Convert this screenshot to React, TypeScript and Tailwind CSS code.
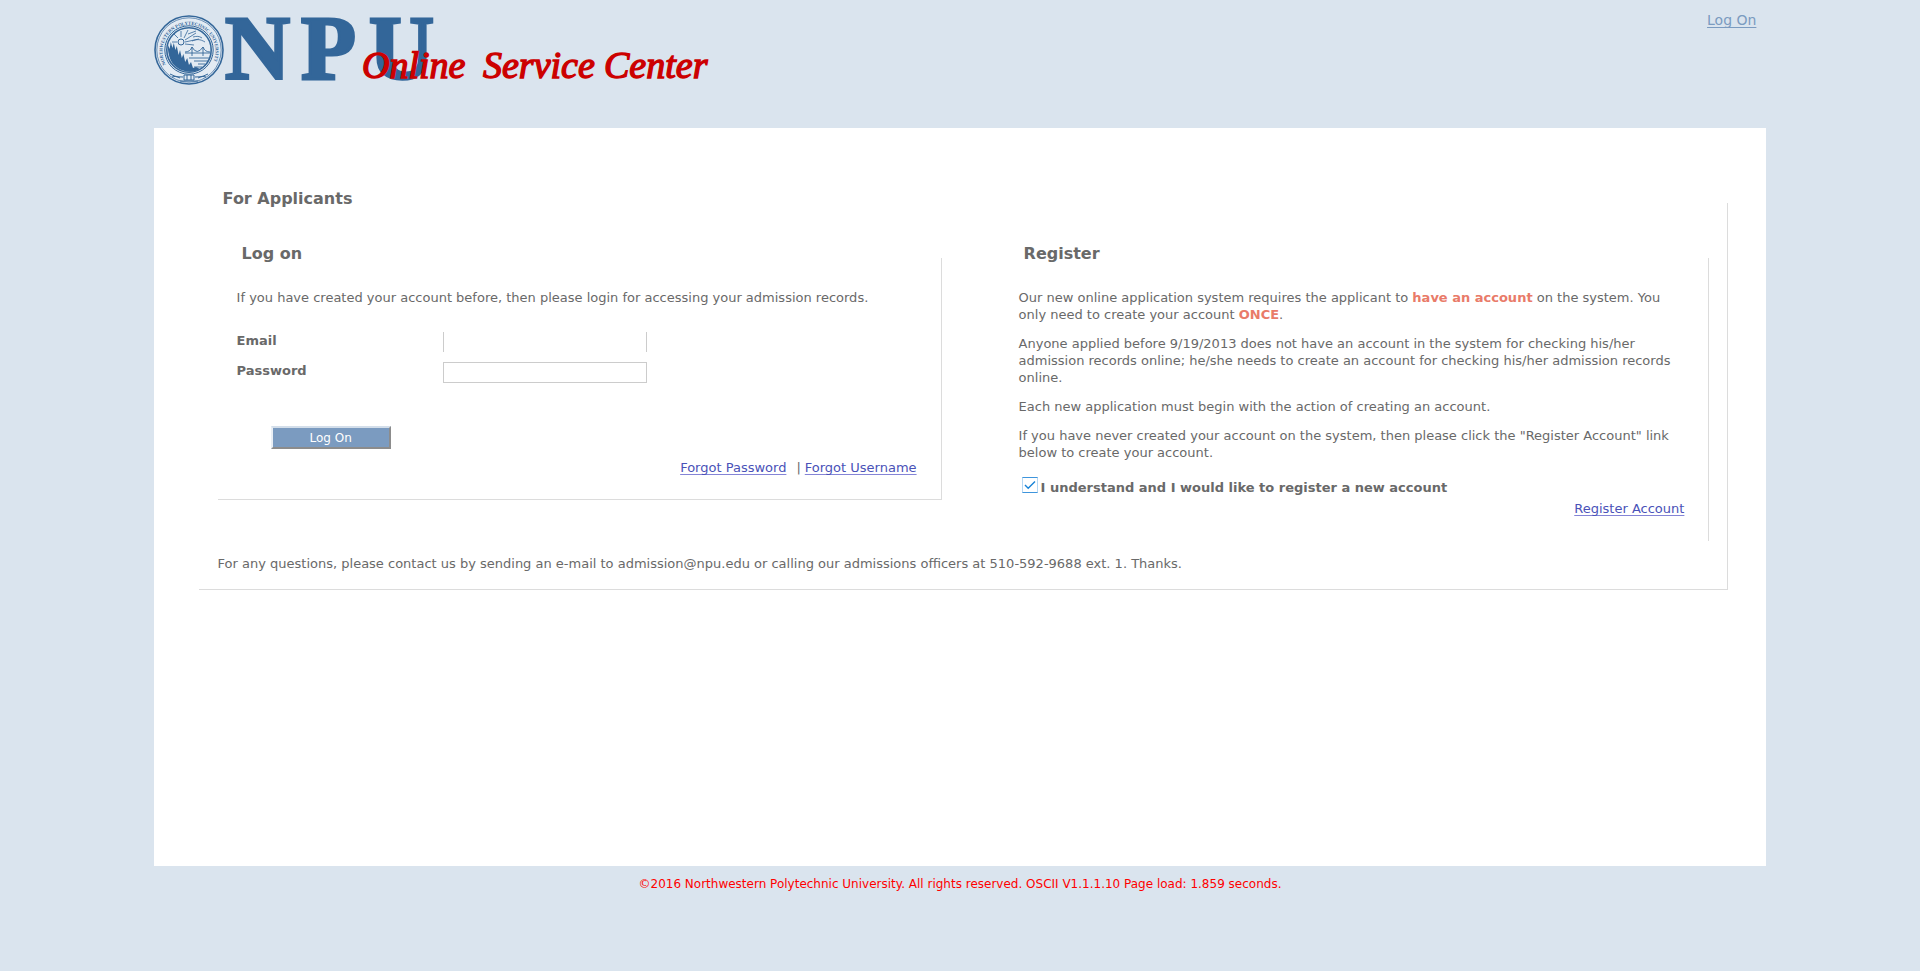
import type { ReactNode } from "react";

function Seal() {
  return (
    <g fill="none" stroke="#336699">
      <circle cx="35" cy="36" r="34" strokeWidth="1.6" fill="#e3ebf3" />
      <circle cx="35" cy="36" r="32.2" strokeWidth="0.7" />
      <circle cx="35" cy="36" r="24.2" strokeWidth="1" />
      <circle cx="35" cy="36" r="22.2" strokeWidth="1.6" />
      <path id="seal-arc" stroke="none" d="M12 50.5 A26.5 26.5 0 1 1 58 50.5" />
      <text fill="#336699" stroke="none" fontSize="4.7" fontWeight="bold" fontFamily="Liberation Serif, serif">
        <textPath href="#seal-arc">NORTHWESTERN POLYTECHNIC UNIVERSITY</textPath>
      </text>
      <path
        fill="#336699"
        stroke="none"
        d="M14 31l1.6 4 1.2-7 1.6 6 1.4-5 1.6 7 1.4-4 1.8 9 1.4-5 1.8 8 1.6-4 1.8 8 2-4 1.8 7 2-3 2 6 3-1 4 2c-8 5-20 3-27-5C15.500 45 13.500 38 14 31z"
      />
      <circle cx="27" cy="28" r="3" fill="#e3ebf3" strokeWidth="1" />
      <path
        strokeWidth="0.8"
        d="M27 23v-6M24 24l-4-4M30 24l4-8M31 26l11-7M31 28l14-3M31 30l9 1M23 28h-5M34 20l8-3M38 27c5-2 8-2 13 1M39 23c4-1 6-1 9 1"
      />
      <path
        strokeWidth="0.9"
        d="M31 39h25M38 33v9M49 33v9M31 38q5 0 7-5q5 9 11 0q2 5 7 5M35 44h20M40 47h14M44 50h7M40 53h8"
      />
      <path
        strokeWidth="1"
        d="M16 60q6 4 13 3M18 63q4-2 8 1M54 60q-6 4-13 3M52 63q-4-2-8 1M30 61h10v5H30zM33 61v5M37 61v5M26 67h18"
      />
    </g>
  );
}

function Logo() {
  return (
    <svg
      width="560"
      height="80"
      viewBox="0 0 560 80"
      role="img"
      aria-label="NPU Online Service Center"
      className="block max-w-full overflow-visible"
    >
      <Seal />
      <g fill="#336699" stroke="#336699" strokeWidth="3" fontFamily="Liberation Serif, serif" fontSize="90" fontWeight="bold">
        <text x="71" y="65">N</text>
        <text x="147" y="65">P</text>
        <text x="215" y="65">U</text>
      </g>
      <g
        fill="#cc0000"
        stroke="#cc0000"
        strokeWidth="1.4"
        fontFamily="Liberation Serif, cursive"
        fontSize="38"
        fontStyle="italic"
      >
        <text x="208" y="64">Online</text>
        <text x="329" y="64">Service</text>
        <text x="450" y="64">Center</text>
      </g>
    </svg>
  );
}

function Group({ title, className = "", children }: { title: string; className?: string; children: ReactNode }) {
  return (
    <fieldset className={"min-w-0 border-[#dcdcdc] " + className}>
      <legend className="ml-6 pb-2 text-base leading-6 font-bold">{title}</legend>
      {children}
    </fieldset>
  );
}

function TextLink({ children }: { children: ReactNode }) {
  return (
    <a
      href="#"
      className="text-[#4a52b8] underline decoration-[#8484d6] decoration-1 underline-offset-2 [text-decoration-skip-ink:none]"
    >
      {children}
    </a>
  );
}

export default function App() {
  return (
    <div className="min-h-screen bg-[#dae4ee] font-['Verdana','DejaVu_Sans',sans-serif] text-[13px] leading-[17px] text-[#696969]">
      <div className="mx-auto w-[84%]">
        <header className="flex h-32 items-start justify-between pt-3 pr-[10px]">
          <h1 className="pt-[2px]">
            <Logo />
          </h1>
          <a
            href="#"
            className="text-sm leading-4 text-[#7b9bc0] underline decoration-1 underline-offset-2 [text-decoration-skip-ink:none]"
          >
            Log On
          </a>
        </header>

        <main className="min-h-[738px] bg-white pt-[59px] pr-[38px] pl-[45px]">
          <Group title="For Applicants" className="border-r border-b pb-[17px]">
            <div className="grid grid-cols-[51fr_50fr] items-start gap-x-[58px] pt-[23px] pr-[18px] pl-[19px]">
              <Group title="Log on" className="border-r border-b pb-[23px]">
                <form className="pt-[15px] pr-6 pl-[19px]" onSubmit={(e) => e.preventDefault()}>
                  <p>If you have created your account before, then please login for accessing your admission records.</p>
                  <div className="mt-[26px] grid grid-cols-[206px_204px] items-start gap-y-[10px] font-bold">
                    <label htmlFor="email">Email</label>
                    <input id="email" type="text" className="h-5 border-x border-[#cccccc] px-1 font-normal" />
                    <label htmlFor="password">Password</label>
                    <input id="password" type="password" className="h-[21px] border border-[#cccccc] px-1 font-normal" />
                  </div>
                  <button
                    type="submit"
                    className="mt-[43px] ml-[34px] flex h-[23px] w-[120px] items-center justify-center border-2 border-t-[#d3deea] border-r-[#8c8c8c] border-b-[#8c8c8c] border-l-[#e9eff5] bg-[#7b9bc0] text-xs text-white"
                  >
                    Log On
                  </button>
                  <div className="mt-[10px] flex justify-end">
                    <TextLink>Forgot Password</TextLink>
                    <span className="mr-1 ml-[10px]">|</span>
                    <TextLink>Forgot Username</TextLink>
                  </div>
                </form>
              </Group>

              <Group title="Register" className="border-r pb-6">
                <div className="flex flex-col gap-3 pt-[15px] pr-5 pl-[19px]">
                  <p>
                    Our new online application system requires the applicant to{" "}
                    <strong className="text-[#e97b69]">have an account</strong> on the system. You only need to create
                    your account <strong className="text-[#e97b69]">ONCE</strong>.
                  </p>
                  <p>
                    Anyone applied before 9/19/2013 does not have an account in the system for checking his/her
                    admission records online; he/she needs to create an account for checking his/her admission records
                    online.
                  </p>
                  <p>Each new application must begin with the action of creating an account.</p>
                  <p>
                    If you have never created your account on the system, then please click the "Register Account" link
                    below to create your account.
                  </p>
                  <div className="pt-1">
                    <label className="flex items-start gap-[3px] pl-[3px] font-bold">
                      <span className="grid size-4 shrink-0 place-items-center">
                        <input
                          type="checkbox"
                          defaultChecked
                          className="peer col-start-1 row-start-1 size-4 appearance-none border border-[#b5d7f3] border-y-[#3e95dc] bg-white"
                        />
                        <svg
                          viewBox="0 0 12 12"
                          className="pointer-events-none col-start-1 row-start-1 hidden size-3 peer-checked:block"
                          fill="none"
                          stroke="#1883d7"
                          strokeWidth="1.4"
                        >
                          <path d="M1 6l3.2 3.2L11 2.5" />
                        </svg>
                      </span>
                      <span className="pt-[2px]">I understand and I would like to register a new account</span>
                    </label>
                    <div className="mt-1 mr-1 flex justify-end">
                      <TextLink>Register Account</TextLink>
                    </div>
                  </div>
                </div>
              </Group>
            </div>
            <p className="mt-[14px] pl-[19px]">
              For any questions, please contact us by sending an e-mail to admission@npu.edu or calling our admissions
              officers at 510-592-9688 ext. 1. Thanks.
            </p>
          </Group>
        </main>

        <footer className="py-[10px] text-center text-xs leading-[17px] text-[#ff0000]">
          ©2016 Northwestern Polytechnic University. All rights reserved. OSCII V1.1.1.10 Page load: 1.859 seconds.
        </footer>
      </div>
    </div>
  );
}
